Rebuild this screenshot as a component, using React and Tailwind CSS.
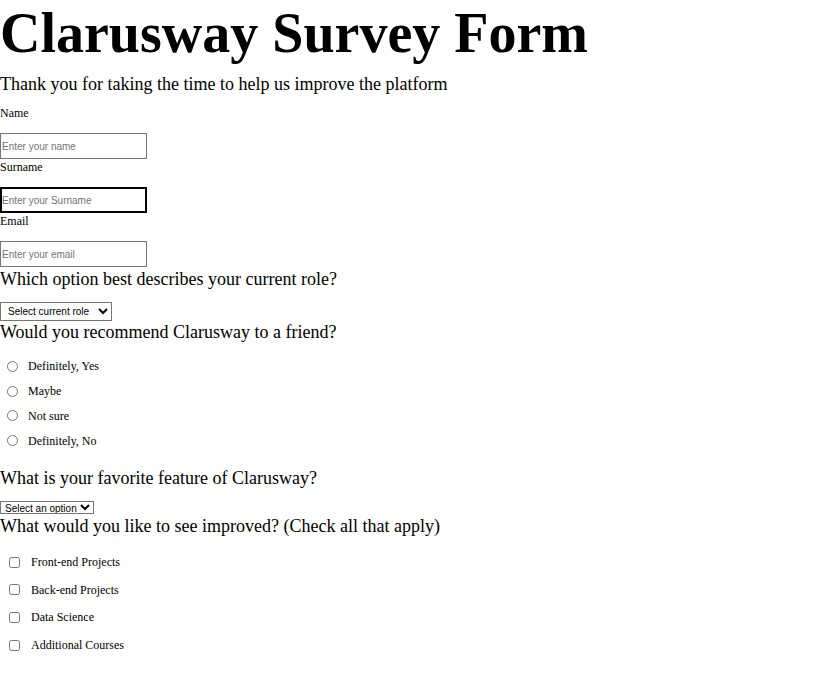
import React from 'react';

const roles = ['Definitely, Yes', 'Maybe', 'Not sure', 'Definitely, No'];
const improve = ['Front-end Projects', 'Back-end Projects', 'Data Science', 'Additional Courses'];

const serif = "font-['Liberation_Serif','Times_New_Roman',serif]";
const sans = "font-['Liberation_Sans',Arial,sans-serif]";

const App = () => {
  return (
    <div className={`min-h-[678px] w-[822px] bg-white text-black ${serif}`}>
      <h1 className="h-[66px] text-[56px] font-bold leading-[66px]">Clarusway Survey Form</h1>
      <p className="mt-[8px] h-[20px] text-[18px] leading-[20px]">
        Thank you for taking the time to help us improve the platform
      </p>

      <form className="flex flex-col">
        <label className="mt-[12px] h-[14px] text-[12px] leading-[14px]">Name</label>
        <input
          className={`mt-[13px] h-[26px] w-[147px] border border-[#767676] px-[1px] text-[10px] placeholder:text-[#757575] ${sans}`}
          placeholder="Enter your name"
        />
        <label className="h-[14px] text-[12px] leading-[16px]">Surname</label>
        <input
          className={`mt-[14px] h-[26px] w-[147px] border-2 border-black px-0 text-[10px] placeholder:text-[#757575] ${sans}`}
          placeholder="Enter your Surname"
        />
        <label className="h-[14px] text-[12px] leading-[16px]">Email</label>
        <input
          className={`mt-[14px] h-[26px] w-[147px] border border-[#767676] px-[1px] text-[10px] placeholder:text-[#757575] ${sans}`}
          placeholder="Enter your email"
        />

        <h3 className="h-[24px] text-[18px] leading-[24px]">Which option best describes your current role?</h3>
        <select
          className={`mt-[11px] h-[19px] w-[112px] border border-[#767676] pl-[3px] text-[10px] ${sans}`}
          defaultValue=""
        >
          <option value="">Select current role</option>
          <option>Student</option>
          <option>Full Time Job</option>
        </select>

        <h3 className="h-[24px] text-[18px] leading-[22px]">Would you recommend Clarusway to a friend?</h3>
        <div className="mt-[9px] flex flex-col">
          {roles.map((r) => (
            <label key={r} className="flex h-[24.8px] items-center text-[12px]">
              <input type="radio" name="rec" className="ml-[7px] mr-[10px] h-[11px] w-[11px]" />
              {r}
            </label>
          ))}
        </div>

        <h3 className="mt-[13px] h-[24px] text-[18px] leading-[24px]">What is your favorite feature of Clarusway?</h3>
        <select
          className={`mt-[11px] h-[13px] w-[94px] border border-[#767676] text-[10px] leading-[11px] ${sans}`}
          defaultValue=""
        >
          <option value="">Select an option</option>
          <option>Projects</option>
          <option>Community</option>
        </select>

        <h3 className="h-[24px] text-[18px] leading-[24px]">What would you like to see improved? (Check all that apply)</h3>
        <div className="mt-[10px] flex flex-col">
          {improve.map((i) => (
            <label key={i} className="flex h-[27.7px] items-center text-[12px]">
              <input type="checkbox" className="ml-[9px] mr-[11px] h-[11px] w-[11px]" />
              {i}
            </label>
          ))}
        </div>
      </form>
    </div>
  );
};

export default App;
